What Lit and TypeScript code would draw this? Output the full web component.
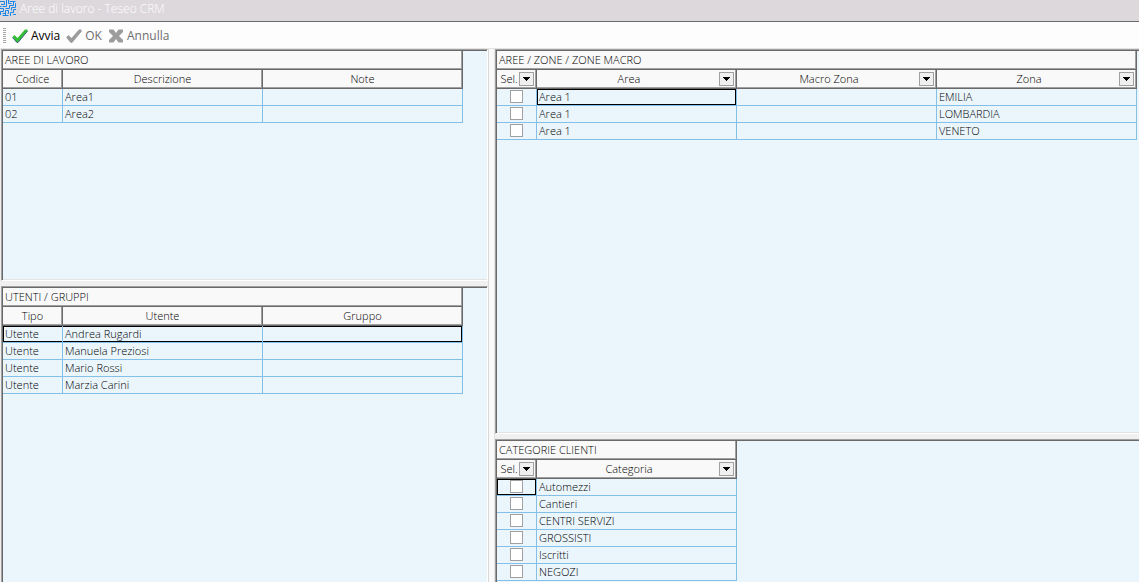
import { LitElement, html, css, svg } from "lit";
import { customElement, property } from "lit/decorators.js";
import { classMap } from "lit/directives/class-map.js";

interface Column {
  title: string;
  width: number;
  filter?: boolean;
  check?: boolean;
}

interface Grid {
  caption: string;
  columns: Column[];
  rows: string[][];
  /** Row that has the focus; the whole row is framed when no column is given. */
  current?: { row: number; column?: number };
}

const WORK_AREAS: Grid = {
  caption: "AREE DI LAVORO",
  columns: [
    { title: "Codice", width: 60 },
    { title: "Descrizione", width: 200 },
    { title: "Note", width: 200 },
  ],
  rows: [
    ["01", "Area1", ""],
    ["02", "Area2", ""],
  ],
};

const USERS: Grid = {
  caption: "UTENTI / GRUPPI",
  columns: [
    { title: "Tipo", width: 60 },
    { title: "Utente", width: 200 },
    { title: "Gruppo", width: 200 },
  ],
  rows: [
    ["Utente", "Andrea Rugardi", ""],
    ["Utente", "Manuela Preziosi", ""],
    ["Utente", "Mario Rossi", ""],
    ["Utente", "Marzia Carini", ""],
  ],
  current: { row: 0 },
};

const ZONES: Grid = {
  caption: "AREE / ZONE / ZONE MACRO",
  columns: [
    { title: "Sel.", width: 40, filter: true, check: true },
    { title: "Area", width: 200, filter: true },
    { title: "Macro Zona", width: 200, filter: true },
    { title: "Zona", width: 200, filter: true },
  ],
  rows: [
    ["", "Area 1", "", "EMILIA"],
    ["", "Area 1", "", "LOMBARDIA"],
    ["", "Area 1", "", "VENETO"],
  ],
  current: { row: 0, column: 1 },
};

const CATEGORIES: Grid = {
  caption: "CATEGORIE CLIENTI",
  columns: [
    { title: "Sel.", width: 40, filter: true, check: true },
    { title: "Categoria", width: 200, filter: true },
  ],
  rows: [
    ["", "Automezzi"],
    ["", "Cantieri"],
    ["", "CENTRI SERVIZI"],
    ["", "GROSSISTI"],
    ["", "Iscritti"],
    ["", "NEGOZI"],
  ],
  current: { row: 0, column: 0 },
};

@customElement("data-grid")
export class DataGrid extends LitElement {
  @property({ attribute: false }) grid!: Grid;

  static styles = css`
    :host {
      display: block;
      min-width: 0;
      min-height: 0;
      overflow: hidden;
      background: #eaf5fc;
      border-top: 1px solid #a0a0a0;
      border-left: 1px solid #a0a0a0;
    }
    .inner {
      box-sizing: border-box;
      height: 100%;
      border-top: 1px solid #696969;
      border-left: 1px solid #696969;
    }
    table {
      table-layout: fixed;
      border-collapse: separate;
      border-spacing: 0;
      font-size: 11px;
      line-height: 16px;
      color: #000;
    }
    caption,
    th {
      box-sizing: border-box;
      height: 19px;
      background: #f9f9f9;
      border-right: 1px solid #696969;
      border-bottom: 1px solid #696969;
      box-shadow: inset -1px -1px #a0a0a0;
      font-weight: inherit;
      white-space: nowrap;
    }
    caption {
      padding: 1px 2px 0;
      text-align: left;
    }
    th {
      padding: 0;
    }
    .head {
      display: flex;
      align-items: center;
      height: 18px;
      padding: 0 2px;
    }
    .label {
      flex: 1;
      text-align: center;
    }
    .filter {
      display: flex;
      align-items: center;
      justify-content: center;
      box-sizing: border-box;
      width: 15px;
      height: 14px;
      padding: 0;
      border: 1px solid #a0a0a0;
      border-radius: 0;
      background: #f0f0f0;
    }
    td {
      box-sizing: border-box;
      height: 17px;
      padding: 0 2px;
      border-right: 1px solid #84bfe8;
      border-bottom: 1px solid #84bfe8;
      white-space: nowrap;
      vertical-align: top;
      overflow: hidden;
    }
    .cell-current {
      box-shadow: inset 0 0 0 1px #000;
    }
    .row-current td {
      box-shadow: inset 0 1px #000, inset 0 -1px #000;
    }
    .row-current td:first-child {
      box-shadow: inset 0 1px #000, inset 0 -1px #000, inset 1px 0 #000;
    }
    .row-current td:last-child {
      box-shadow: inset 0 1px #000, inset 0 -1px #000, inset -1px 0 #000;
    }
    .check {
      appearance: none;
      display: block;
      box-sizing: border-box;
      width: 13px;
      height: 13px;
      margin: 1px auto 0;
      border: 1px solid #a0a0a0;
      background: #fff;
    }
    .check:checked {
      background: #696969;
    }
  `;

  render() {
    const { caption, columns, rows, current } = this.grid;
    const width = columns.reduce((sum, c) => sum + c.width, 0);
    return html`<div class="inner">
      <table style="width:${width}px">
        <caption>${caption}</caption>
        <colgroup>
          ${columns.map((c) => html`<col style="width:${c.width}px" />`)}
        </colgroup>
        <thead>
          <tr>
            ${columns.map(
              (c) => html`<th scope="col">
                <div class="head">
                  <span class="label">${c.title}</span>
                  ${c.filter
                    ? html`<button class="filter" aria-label="Filtro ${c.title}">
                        <svg width="7" height="4" viewBox="0 0 7 4" shape-rendering="crispEdges">
                          <path d="M0 0H7V1H6V2H5V3H4V4H3V3H2V2H1V1H0Z" />
                        </svg>
                      </button>`
                    : null}
                </div>
              </th>`
            )}
          </tr>
        </thead>
        <tbody>
          ${rows.map(
            (row, r) => html`<tr
              class=${classMap({
                "row-current": current?.row === r && current.column === undefined,
              })}
            >
              ${row.map(
                (text, c) => html`<td
                  class=${classMap({
                    "cell-current": current?.row === r && current.column === c,
                  })}
                >${columns[c].check
                  ? html`<input class="check" type="checkbox" aria-label=${`Seleziona ${row[1]} ${row[3] ?? ""}`} />`
                  : text}</td>`
              )}
            </tr>`
          )}
        </tbody>
      </table>
    </div>`;
  }
}

const tick = (fill: string, edge: string) => svg`
  <path d="M0.500 9L2.500 7L5.500 10L13 1.500H15.500V3L6 14.500H4.500Z" fill=${fill} />
  <path d="M0.500 9.500L5 14.500H6L15.500 3" fill="none" stroke=${edge} />`;

@customElement("app-root")
export class AppRoot extends LitElement {
  static styles = css`
    :host {
      display: flex;
      flex-direction: column;
      height: 100vh;
      overflow: hidden;
      background: #f0f0f0;
      font-family: "Open Sans", "Noto Sans", sans-serif;
      font-weight: 300;
    }
    .titlebar {
      display: flex;
      align-items: flex-start;
      gap: 4px;
      height: 21px;
      background: #dcd8dc;
      color: #fff;
    }
    .title {
      margin: 0;
      font-size: 12px;
      font-weight: 300;
      line-height: 18px;
    }
    .toolbar {
      display: flex;
      align-items: center;
      gap: 6px;
      box-sizing: border-box;
      height: 27px;
      padding: 1px 0 0 3px;
      border-top: 1px solid #696969;
      background: #fdfdfd;
    }
    .grip {
      width: 3px;
      height: 16px;
      background: repeating-linear-gradient(#a8a8a8 0 1px, #fdfdfd 1px 2px);
    }
    .tool {
      display: flex;
      align-items: center;
      gap: 3px;
      padding: 0;
      border: 0;
      background: none;
      color: #000;
      font-family: inherit;
      font-size: 12px;
      font-weight: 400;
      line-height: 16px;
    }
    .tool:disabled {
      color: #6d6d6d;
    }
    .tool svg {
      display: block;
    }
    .work {
      flex: 1;
      min-height: 0;
      display: grid;
      grid-template-columns: minmax(0, 122fr) 7px minmax(0, 161fr);
      border-top: 1px solid #e3e3e3;
    }
    .stack {
      display: grid;
      row-gap: 5px;
      min-width: 0;
      min-height: 0;
    }
    .stack-left {
      grid-template-rows: minmax(0, 29fr) minmax(0, 37fr);
      padding-left: 1px;
    }
    .stack-right {
      grid-template-rows: minmax(0, 385fr) minmax(0, 143fr);
    }
    .upper {
      border-bottom: 1px solid #fff;
      box-shadow: inset 0 -1px #e3e3e3;
    }
    .framed {
      border-right: 1px solid #fff;
    }
    .split {
      box-sizing: border-box;
      border-left: 1px solid #d8d8d8;
      border-right: 1px solid #e3e3e3;
      background: #f9f9f9;
    }
  `;

  render() {
    return html`
      <header class="titlebar">
        <svg width="16" height="16" viewBox="0 0 16 16" fill="none" stroke="#1a86e8">
          <path d="M0 1.500H4.500V4.500H1M6.500 0V6.500H2.500M8.500 0V3.500H11.500M9.500 1.500H15.500M13.500 1V5.500H9.500V8.500H5.500M16 3.500H15.500V7.500H11.500V10.500M0 6.500H1.500M0 8.500H3.500V11.500H0.500V15M2.500 13.500H5.500M5.500 16V10.500H8.500V13.500H7.500M10.500 16V12.500H13.500V9.500H16M13 14.500H16M2.500 15.500H8.500" />
        </svg>
        <h1 class="title">Aree di lavoro - Teseo CRM</h1>
      </header>
      <nav class="toolbar">
        <span class="grip"></span>
        <button class="tool">
          <svg width="16" height="16" viewBox="0 0 16 16">${tick("#32c032", "#3c5a8c")}</svg>
          Avvia
        </button>
        <button class="tool" disabled>
          <svg width="16" height="16" viewBox="0 0 16 16">${tick("#9c9c9c", "#9c9c9c")}</svg>
          OK
        </button>
        <button class="tool" disabled>
          <svg width="16" height="16" viewBox="0 0 16 16">
            <path d="M1 1.500H5.500L8 5L10.500 1.500H15V4L11 8L15 12V14.500H10.500L8 11L5.500 14.500H1V12L5 8L1 4Z" fill="#9c9c9c" />
          </svg>
          Annulla
        </button>
      </nav>
      <main class="work">
        <div class="stack stack-left">
          <data-grid class="upper framed" .grid=${WORK_AREAS}></data-grid>
          <data-grid class="framed" .grid=${USERS}></data-grid>
        </div>
        <div class="split"></div>
        <div class="stack stack-right">
          <data-grid class="upper" .grid=${ZONES}></data-grid>
          <data-grid .grid=${CATEGORIES}></data-grid>
        </div>
      </main>
    `;
  }
}
